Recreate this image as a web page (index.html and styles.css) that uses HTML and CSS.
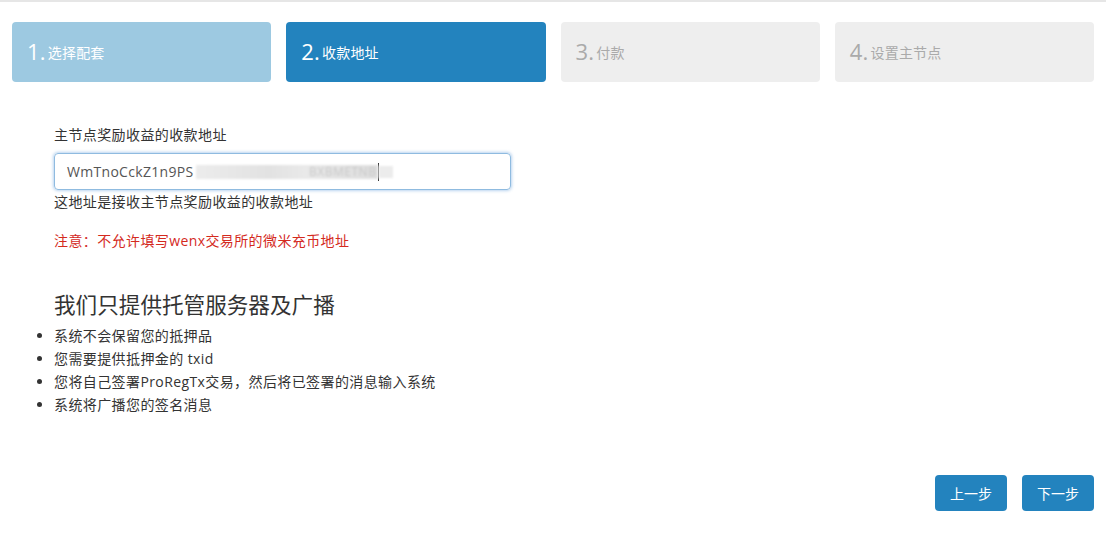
FILE: index.html
```html
<!DOCTYPE html>
<html lang="zh-CN">
<head>
    <meta charset="UTF-8">
    <meta name="viewport" content="width=device-width, initial-scale=1.0">
    <title>收款地址</title>
    <link rel="stylesheet" href="styles.css">
</head>
<body>
    <div class="page">
        <div class="steps">
            <div class="step done"><span class="num">1.</span>选择配套</div>
            <div class="step active"><span class="num">2.</span>收款地址</div>
            <div class="step"><span class="num">3.</span>付款</div>
            <div class="step"><span class="num">4.</span>设置主节点</div>
        </div>

        <div class="form">
            <label class="form-label">主节点奖励收益的收款地址</label>
            <div class="input-box">
                <span class="addr">WmTnoCckZ1n9PS</span>
                <span class="mask"><span class="mask-text">BXBMETNB</span></span>
                <span class="caret"></span>
                <span class="mask-tail"></span>
            </div>
            <p class="help">这地址是接收主节点奖励收益的收款地址</p>
            <p class="warn">注意：不允许填写wenx交易所的微米充币地址</p>
        </div>

        <h3 class="title">我们只提供托管服务器及广播</h3>
        <ul class="notes">
            <li>系统不会保留您的抵押品</li>
            <li>您需要提供抵押金的 txid</li>
            <li>您将自己签署ProRegTx交易，然后将已签署的消息输入系统</li>
            <li>系统将广播您的签名消息</li>
        </ul>

        <div class="actions">
            <button class="btn">上一步</button>
            <button class="btn">下一步</button>
        </div>
    </div>
</body>
</html>
```

FILE: styles.css
```css
body {
    margin: 0;
    background-color: white;
    font-family: "Open Sans", "Noto Sans CJK SC", sans-serif;
    color: #333;
    font-size: 14px;
}

.page {
    border-top: 2px solid #e6e6e6;
    padding: 0 12px;
    height: 535px;
    box-sizing: border-box;
    display: flex;
    flex-direction: column;
}

.steps {
    display: flex;
    gap: 15px;
    margin-top: 20px;
}

.step {
    flex: 1;
    height: 60px;
    border-radius: 4px;
    background-color: #eeeeee;
    color: #aaa;
    display: flex;
    align-items: center;
    padding-left: 15px;
    font-size: 14px;
    letter-spacing: 0.2px;
}

.step .num {
    font-size: 22px;
    margin-right: 2px;
    position: relative;
    top: -1px;
}

.step.done {
    background-color: #9dc9e1;
    color: white;
}

.step.active {
    background-color: #2383be;
    color: white;
}

.form {
    padding-left: 42px;
    margin-top: 44px;
    letter-spacing: 0.4px;
}

.form-label {
    display: block;
    line-height: 18px;
}

.input-box {
    width: 457px;
    height: 37px;
    box-sizing: border-box;
    margin-top: 9px;
    border: 1px solid #8fbbe0;
    border-radius: 4px;
    box-shadow: 0 0 3px 1px rgba(102, 160, 220, 0.45);
    padding-left: 12px;
    display: flex;
    align-items: center;
    font-size: 14px;
    color: #555;
    letter-spacing: 0.3px;
}

.mask {
    width: 182px;
    height: 14px;
    margin-left: 3px;
    background: linear-gradient(90deg, #ececec, #e2e2e2 40%, #e9e9e9 60%, #dedede);
    filter: blur(1px);
    display: flex;
    justify-content: flex-end;
    align-items: center;
    overflow: hidden;
}

.mask-text {
    font-size: 12px;
    color: #c8c8c8;
    letter-spacing: 0.5px;
    padding-right: 2px;
}

.caret {
    width: 1px;
    height: 18px;
    background-color: #333;
}

.mask-tail {
    width: 14px;
    height: 12px;
    background-color: #ececec;
    filter: blur(1px);
}

.help {
    margin: 3px 0 0;
    line-height: 18px;
}

.warn {
    margin: 21px 0 0;
    color: #d42a1e;
    line-height: 18px;
}

.title {
    margin: 41px 0 0 42px;
    font-size: 21.6px;
    font-weight: normal;
    line-height: 28px;
}

.notes {
    margin: 5px 0 0;
    padding-left: 42px;
    letter-spacing: 0.4px;
}

.notes li {
    line-height: 23px;
}

.actions {
    margin-top: auto;
    margin-bottom: 24px;
    display: flex;
    justify-content: flex-end;
    gap: 15px;
}

.btn {
    width: 72px;
    height: 36px;
    background-color: #2383be;
    color: white;
    border: none;
    border-radius: 4px;
    font-family: "Noto Sans CJK SC", sans-serif;
    font-size: 14px;
    cursor: pointer;
}
```
